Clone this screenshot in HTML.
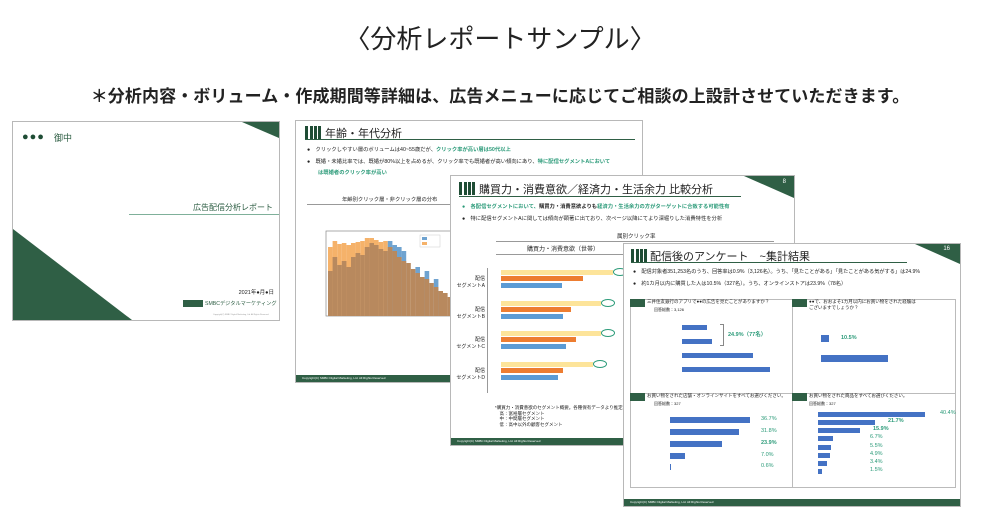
<!DOCTYPE html>
<html><head><meta charset="utf-8">
<style>
*{margin:0;padding:0;box-sizing:border-box}
body{width:1000px;height:520px;background:#fff;position:relative;overflow:hidden;font-family:"Liberation Sans","Noto Sans CJK JP",sans-serif;color:#222}
.a{position:absolute}
.sl{position:absolute;background:#fff;border:1px solid #b8b8b8;overflow:hidden}
.g{background:#2f5f45}
.t{position:absolute;white-space:nowrap}
.bar{position:absolute;background:#4472c4}
.hb{position:absolute;width:3px;background:#1f4d35}
.ft{position:absolute;left:0;right:0;bottom:0;height:7px;background:#2f5f45;color:#fff;font-size:3px;padding-left:6px;line-height:7px}
.tri{position:absolute;width:0;height:0}
.teal{color:#2a9a78}
</style></head><body>
<div class="t" style="left:0;width:1000px;top:22px;text-align:center;font-size:26px;line-height:34px">〈分析レポートサンプル〉</div>
<div class="t" style="left:0;width:1000px;top:85px;text-align:center;font-size:17px;font-weight:bold;line-height:24px;letter-spacing:0.1px">＊分析内容・ボリューム・作成期間等詳細は、広告メニューに応じてご相談の上設計させていただきます。</div>

<!-- Slide 1 -->
<div class="sl" style="left:12px;top:121px;width:268px;height:200px">
 <div class="tri" style="right:0;top:0;border-top:16px solid #2f5f45;border-left:37px solid transparent"></div>
 <div class="t" style="left:9px;top:9px;font-size:11px;color:#1f4d35;letter-spacing:1px">●●●</div>
 <div class="t" style="left:41px;top:9px;font-size:9px;color:#2f5f45">御中</div>
 <div class="t" style="right:6px;top:80px;font-size:8px;color:#2f5f45">広告配信分析レポート</div>
 <div class="a" style="left:116px;top:92px;width:152px;height:1px;background:#7fb09a"></div>
 <div class="tri" style="left:0;bottom:0;border-bottom:91px solid #2f5f45;border-right:119px solid transparent"></div>
 <div class="t" style="right:5px;top:166px;font-size:5.5px">2021年●月●日</div>
 <div class="a g" style="left:170px;top:178px;width:20px;height:7px"></div>
 <div class="t" style="left:192px;top:178px;font-size:5.2px;color:#2f5f45">SMBCデジタルマーケティング</div>
 <div class="t" style="left:200px;top:192px;font-size:2px;color:#999">Copyright(C) SMBC Digital Marketing, Ltd. All Rights Reserved</div>
</div>

<!-- Slide 2 -->
<div class="sl" style="left:295px;top:120px;width:348px;height:263px">
 <div class="hb" style="left:9px;top:5px;height:13px"></div><div class="hb" style="left:14px;top:5px;height:13px"></div><div class="hb" style="left:18px;top:5px;height:13px"></div><div class="hb" style="left:22px;top:5px;height:13px"></div>
 <div class="t" style="left:29px;top:4px;font-size:11px">年齢・年代分析</div>
 <div class="a" style="left:9px;top:18px;width:330px;height:1px;background:#2f5f45"></div>
 <div class="t" style="left:11px;top:24px;font-size:5.3px">●　クリックしやすい層のボリュームは40~55歳だが、<b class="teal">クリック率が高い層は50代以上</b></div>
 <div class="t" style="left:11px;top:36px;font-size:5.3px">●　既婚・未婚比率では、既婚が80%以上を占めるが、クリック率でも既婚者が高い傾向にあり、<b class="teal">特に配信セグメントAにおいて</b></div>
 <div class="t" style="left:22px;top:47px;font-size:5.3px;font-weight:bold" ><span class="teal">は既婚者のクリック率が高い</span></div>
 <div class="t" style="left:46px;top:74px;font-size:5.3px">年齢別クリック層・非クリック層の分布</div>
 <div class="a" style="left:11px;top:83px;width:150px;height:1px;background:#999"></div>
 <svg class="a" style="left:20px;top:108px" width="140" height="100">
  <rect x="10" y="2" width="128" height="85" fill="#fff" stroke="#888" stroke-width="0.7"/>
  <g transform="translate(12,0) scale(1.15,1) translate(-12,0)">
  <g fill="#f5b26a">
   <rect x="12" y="18" width="4" height="69"/><rect x="16" y="12" width="4" height="75"/><rect x="20" y="15" width="4" height="72"/><rect x="24" y="14" width="4" height="73"/><rect x="28" y="16" width="4" height="71"/><rect x="32" y="14" width="4" height="73"/><rect x="36" y="13" width="4" height="74"/><rect x="40" y="12" width="4" height="75"/><rect x="44" y="9" width="4" height="78"/><rect x="48" y="9" width="4" height="78"/><rect x="52" y="11" width="4" height="76"/><rect x="56" y="13" width="4" height="74"/><rect x="60" y="12" width="4" height="75"/>
  </g>
  <g fill="#6fa3d0"><rect x="64" y="12" width="4" height="75"/><rect x="68" y="16" width="4" height="71"/><rect x="72" y="18" width="4" height="69"/><rect x="76" y="22" width="4" height="65"/><rect x="88" y="38" width="4" height="49"/><rect x="96" y="42" width="4" height="45"/><rect x="104" y="50" width="4" height="37"/></g>
  <g fill="#b8895e">
   <rect x="12" y="42" width="4" height="45"/><rect x="16" y="28" width="4" height="59"/><rect x="20" y="36" width="4" height="51"/><rect x="24" y="32" width="4" height="55"/><rect x="28" y="38" width="4" height="49"/><rect x="32" y="28" width="4" height="59"/><rect x="36" y="24" width="4" height="63"/><rect x="40" y="26" width="4" height="61"/><rect x="44" y="18" width="4" height="69"/><rect x="48" y="14" width="4" height="73"/><rect x="52" y="16" width="4" height="71"/><rect x="56" y="20" width="4" height="67"/><rect x="60" y="22" width="4" height="65"/><rect x="64" y="18" width="4" height="69"/><rect x="68" y="22" width="4" height="65"/><rect x="72" y="28" width="4" height="59"/><rect x="76" y="32" width="4" height="55"/><rect x="80" y="34" width="4" height="53"/><rect x="84" y="40" width="4" height="47"/><rect x="88" y="44" width="4" height="43"/><rect x="92" y="48" width="4" height="39"/><rect x="96" y="50" width="4" height="37"/><rect x="100" y="54" width="4" height="33"/><rect x="104" y="58" width="4" height="29"/><rect x="108" y="62" width="4" height="25"/><rect x="112" y="64" width="4" height="23"/><rect x="116" y="68" width="4" height="19"/>
  </g></g>
  <rect x="104" y="6" width="20" height="12" fill="#fff" stroke="#ccc" stroke-width="0.5"/><rect x="106" y="8" width="5" height="3" fill="#6fa3d0"/><rect x="106" y="13" width="5" height="3" fill="#f5b26a"/>
 </svg>
 <div class="ft" style="height:7px">Copyright(C) SMBC Digital Marketing, Ltd. All Rights Reserved</div>
</div>

<!-- Slide 3 -->
<div class="sl" style="left:450px;top:175px;width:345px;height:271px">
 <div class="tri" style="right:0;top:0;border-top:22px solid #2f5f45;border-left:50px solid transparent"></div>
 <div class="t" style="right:8px;top:3px;font-size:6px;color:#fff">8</div>
 <div class="hb" style="left:8px;top:6px;height:13px"></div><div class="hb" style="left:13px;top:6px;height:13px"></div><div class="hb" style="left:17px;top:6px;height:13px"></div><div class="hb" style="left:21px;top:6px;height:13px"></div>
 <div class="t" style="left:28px;top:5px;font-size:11px">購買力・消費意欲／経済力・生活余力 比較分析</div>
 <div class="a" style="left:8px;top:20px;width:282px;height:1px;background:#2f5f45"></div>
 <div class="t" style="left:11px;top:26px;font-size:5.3px;font-weight:bold"><span class="teal">●　各配信セグメントにおいて、</span>購買力・消費意欲よりも<span class="teal">経済力・生活余力の方がターゲットに合致する可能性有</span></div>
 <div class="t" style="left:11px;top:38px;font-size:5.3px">●　特に配信セグメントAに関しては傾向が顕著に出ており、次ページ以降にてより深堀りした消費特性を分析</div>
 <div class="t" style="left:166px;top:56px;font-size:5.5px">属別クリック率</div>
 <div class="a" style="left:45px;top:65px;width:278px;height:1px;background:#999"></div>
 <div class="t" style="left:76px;top:68px;font-size:6px">購買力・消費意欲（世帯）</div>
 <div class="a" style="left:45px;top:78px;width:130px;height:1px;background:#999"></div>
 <div class="a" style="left:36px;top:92px;width:1px;height:125px;background:#999"></div>
 <div class="t" style="left:4px;top:100px;font-size:5px;text-align:right;line-height:7px;width:30px">配信<br>セグメントA</div>
 <div class="t" style="left:4px;top:131px;font-size:5px;text-align:right;line-height:7px;width:30px">配信<br>セグメントB</div>
 <div class="t" style="left:4px;top:161px;font-size:5px;text-align:right;line-height:7px;width:30px">配信<br>セグメントC</div>
 <div class="t" style="left:4px;top:192px;font-size:5px;text-align:right;line-height:7px;width:30px">配信<br>セグメントD</div>
 <div class="a" style="left:50px;top:94px;width:112px;height:5px;background:#fde49a"></div><div class="a" style="left:50px;top:100px;width:82px;height:5px;background:#ed7d31"></div><div class="a" style="left:50px;top:107px;width:61px;height:5px;background:#5b9bd5"></div>
 <div class="a" style="left:50px;top:125px;width:100px;height:5px;background:#fde49a"></div><div class="a" style="left:50px;top:131px;width:70px;height:5px;background:#ed7d31"></div><div class="a" style="left:50px;top:138px;width:62px;height:5px;background:#5b9bd5"></div>
 <div class="a" style="left:50px;top:155px;width:100px;height:5px;background:#fde49a"></div><div class="a" style="left:50px;top:161px;width:75px;height:5px;background:#ed7d31"></div><div class="a" style="left:50px;top:168px;width:65px;height:5px;background:#5b9bd5"></div>
 <div class="a" style="left:50px;top:186px;width:92px;height:5px;background:#fde49a"></div><div class="a" style="left:50px;top:192px;width:62px;height:5px;background:#ed7d31"></div><div class="a" style="left:50px;top:199px;width:57px;height:5px;background:#5b9bd5"></div>
 <div class="a" style="left:162px;top:92px;width:14px;height:8px;border:1px solid #2a9a78;border-radius:50%"></div>
 <div class="a" style="left:150px;top:123px;width:14px;height:8px;border:1px solid #2a9a78;border-radius:50%"></div>
 <div class="a" style="left:150px;top:153px;width:14px;height:8px;border:1px solid #2a9a78;border-radius:50%"></div>
 <div class="a" style="left:142px;top:184px;width:14px;height:8px;border:1px solid #2a9a78;border-radius:50%"></div>
 <div class="t" style="left:44px;top:229px;font-size:4.5px;line-height:5.5px">*購買力・消費意欲のセグメント概要。各種保有データより推定。世帯ベース<br>　高：富裕層セグメント<br>　中：中間層セグメント<br>　低：高中以外の顧客セグメント</div>
 <div class="ft">Copyright(C) SMBC Digital Marketing, Ltd. All Rights Reserved</div>
</div>

<!-- Slide 4 -->
<div class="sl" style="left:623px;top:243px;width:338px;height:264px">
 <div class="tri" style="right:0;top:0;border-top:20px solid #2f5f45;border-left:45px solid transparent"></div>
 <div class="t" style="right:10px;top:2px;font-size:6px;color:#fff">16</div>
 <div class="hb" style="left:7px;top:5px;height:14px"></div><div class="hb" style="left:12px;top:5px;height:14px"></div><div class="hb" style="left:16px;top:5px;height:14px"></div><div class="hb" style="left:20px;top:5px;height:14px"></div>
 <div class="t" style="left:26px;top:4px;font-size:11px">配信後のアンケート　~集計結果</div>
 <div class="a" style="left:7px;top:18px;width:276px;height:1px;background:#2f5f45"></div>
 <div class="t" style="left:9px;top:24px;font-size:5.2px">●　配信対象者351,253名のうち、回答率は0.9%（3,126名）。うち、「見たことがある」「見たことがある気がする」は24.9%</div>
 <div class="t" style="left:9px;top:36px;font-size:5.2px">●　約1カ月以内に購買した人は10.5%（327名）。うち、オンラインストアは23.9%（78名）</div>
 <div class="a" style="left:6px;top:55px;width:326px;height:189px;border:1px solid #bbb"></div>
 <div class="a" style="left:168px;top:55px;width:1px;height:189px;background:#bbb"></div>
 <div class="a" style="left:6px;top:149px;width:326px;height:1px;background:#bbb"></div>
 <div class="a g" style="left:6px;top:55px;width:15px;height:8px"></div><div class="t" style="left:23px;top:55px;font-size:4.5px">三井住友銀行のアプリで●●の広告を見たことがありますか？</div>
 <div class="t" style="left:30px;top:63px;font-size:4px">回答総数：3,126</div>
 <div class="a g" style="left:168px;top:55px;width:15px;height:8px"></div><div class="t" style="left:185px;top:55px;font-size:4.5px;line-height:6px">●●で、おおよそ1カ月以内にお買い物をされた経験は<br>ございますでしょうか？</div>
 <div class="a g" style="left:6px;top:149px;width:15px;height:8px"></div><div class="t" style="left:23px;top:149px;font-size:4.5px">お買い物をされた店舗・オンラインサイトをすべてお選びください。</div>
 <div class="t" style="left:30px;top:157px;font-size:4px">回答総数：327</div>
 <div class="a g" style="left:168px;top:149px;width:15px;height:8px"></div><div class="t" style="left:185px;top:149px;font-size:4.5px">お買い物をされた商品をすべてお選びください。</div>
 <div class="t" style="left:185px;top:157px;font-size:4px">回答総数：327</div>
 <div class="bar" style="left:58px;top:81px;width:25px;height:5px"></div>
 <div class="bar" style="left:58px;top:95px;width:30px;height:5px"></div>
 <div class="bar" style="left:58px;top:109px;width:71px;height:5px"></div>
 <div class="bar" style="left:58px;top:123px;width:88px;height:5px"></div>
 <div class="a" style="left:96px;top:80px;width:4px;height:22px;border:1px solid #888;border-left:0"></div>
 <div class="t teal" style="left:104px;top:86px;font-size:5.5px;font-weight:bold">24.9%（77名）</div>
 <div class="bar" style="left:197px;top:91px;width:8px;height:7px"></div>
 <div class="t teal" style="left:217px;top:91px;font-size:5.5px;font-weight:bold">10.5%</div>
 <div class="bar" style="left:197px;top:111px;width:67px;height:7px"></div>
 <div class="bar" style="left:46px;top:173px;width:80px;height:6px"></div><div class="t teal" style="left:137px;top:172px;font-size:5.5px">36.7%</div>
 <div class="bar" style="left:46px;top:185px;width:69px;height:6px"></div><div class="t teal" style="left:137px;top:184px;font-size:5.5px">31.8%</div>
 <div class="bar" style="left:46px;top:197px;width:52px;height:6px"></div><div class="t teal" style="left:137px;top:196px;font-size:5.5px;font-weight:bold">23.9%</div>
 <div class="bar" style="left:46px;top:209px;width:15px;height:6px"></div><div class="t teal" style="left:137px;top:208px;font-size:5.5px">7.0%</div>
 <div class="bar" style="left:46px;top:220px;width:1px;height:6px"></div><div class="t teal" style="left:137px;top:219px;font-size:5.5px">0.6%</div>
 <div class="bar" style="left:194px;top:168px;width:107px;height:5px"></div><div class="t teal" style="left:316px;top:166px;font-size:5.5px">40.4%</div>
 <div class="bar" style="left:194px;top:176px;width:57px;height:5px"></div><div class="t teal" style="left:264px;top:174px;font-size:5.5px;font-weight:bold">21.7%</div>
 <div class="bar" style="left:194px;top:184px;width:42px;height:5px"></div><div class="t teal" style="left:249px;top:182px;font-size:5.5px;font-weight:bold">15.9%</div>
 <div class="bar" style="left:194px;top:192px;width:15px;height:5px"></div><div class="t teal" style="left:246px;top:190px;font-size:5.5px">6.7%</div>
 <div class="bar" style="left:194px;top:201px;width:13px;height:5px"></div><div class="t teal" style="left:246px;top:199px;font-size:5.5px">5.5%</div>
 <div class="bar" style="left:194px;top:209px;width:12px;height:5px"></div><div class="t teal" style="left:246px;top:207px;font-size:5.5px">4.9%</div>
 <div class="bar" style="left:194px;top:217px;width:9px;height:5px"></div><div class="t teal" style="left:246px;top:215px;font-size:5.5px">3.4%</div>
 <div class="bar" style="left:194px;top:225px;width:4px;height:5px"></div><div class="t teal" style="left:246px;top:223px;font-size:5.5px">1.5%</div>
 <div class="ft">Copyright(C) SMBC Digital Marketing, Ltd. All Rights Reserved</div>
</div>
</body></html>
